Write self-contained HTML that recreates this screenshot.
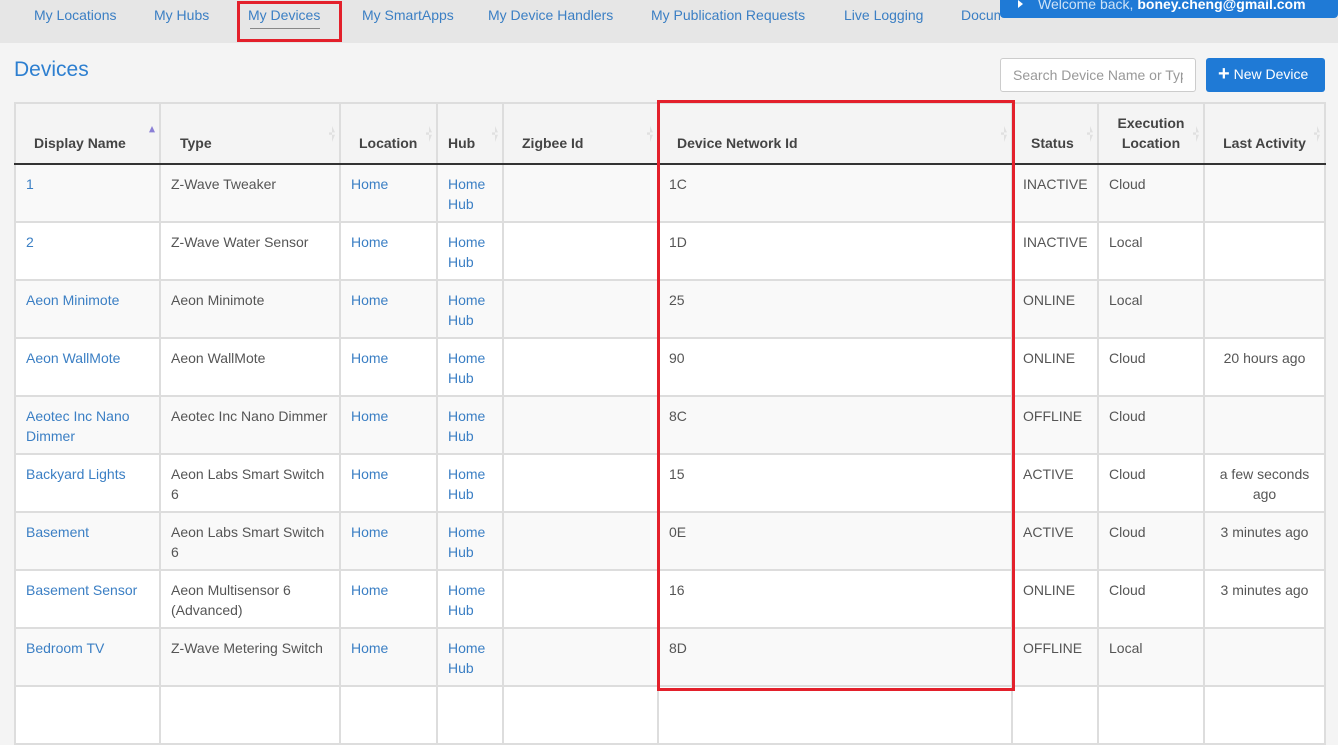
<!DOCTYPE html>
<html><head><style>
*{box-sizing:border-box;margin:0;padding:0}
body{width:1338px;height:692px;overflow:hidden;background:#f4f4f4;font-family:"Liberation Sans",sans-serif;font-size:14px;color:#555;position:relative}
.nav{position:absolute;left:0;top:0;width:1338px;height:43px;background:#e6e6e6}
.nav a{position:absolute;top:7px;color:#3b7fc4;font-size:14px;text-decoration:none;white-space:nowrap;overflow:hidden}
.welcome{position:absolute;left:1000px;top:-12px;width:338px;height:30px;background:#1f7ad6;border-radius:0 0 4px 4px;color:#cfe3f7;font-size:14px;padding:8px 0 0 38px;white-space:nowrap;overflow:hidden}
.welcome b{color:#fff}
.welcome:before{content:"";position:absolute;left:18px;top:12px;border-left:5px solid #fff;border-top:4px solid transparent;border-bottom:4px solid transparent}
h1{position:absolute;left:14px;top:58px;font-size:21px;font-weight:normal;color:#2d7fd0}
.search{position:absolute;left:1000px;top:58px;width:196px;height:34px;border:1px solid #ccc;border-radius:3px;background:#fff;color:#999;padding:8px 0 0 12px;font-size:14px;white-space:nowrap;overflow:hidden}
.search span{display:inline-block;width:170px;overflow:hidden}
.btn{position:absolute;left:1206px;top:58px;width:119px;height:34px;background:#1f7ad6;border-radius:3px;color:#fff;font-size:14px;padding:8px 0 0 12px;white-space:nowrap}
.btn b{font-size:20px;position:relative;top:1px;line-height:14px}
table{position:absolute;left:14px;top:102px;border-collapse:collapse;table-layout:fixed;width:1310px}
td,th{border:2px solid #ddd;padding:9px 10px 7px;vertical-align:top;line-height:20px;text-align:left}
th{height:60px;vertical-align:bottom;color:#444;font-weight:bold;border-bottom:2px solid #333;position:relative;background:#f4f4f4;padding-bottom:10px}
th:after{content:"";position:absolute;right:4px;top:22px;width:6px;height:16px;background:#e0e0e0;clip-path:polygon(50% 0,100% 40%,0 40%,0 55%,100% 55%,50% 100%)}
th.sorted:after{background:#8a7fd6;clip-path:polygon(50% 0,100% 40%,0 40%);}
tbody tr{height:58px}
tbody td{height:58px}
tbody tr:nth-child(odd) td{background:#f9f9f9}
tbody tr:nth-child(even) td{background:#fff}
a.l{color:#3b7fc4}
.box{position:absolute;border:3px solid #e3202b}
</style></head><body>
<div class="nav">
<a style="left:34px">My Locations</a>
<a style="left:154px">My Hubs</a>
<a style="left:248px">My Devices</a>
<div style="position:absolute;left:250px;top:28px;width:70px;height:1px;background:#888"></div>
<a style="left:362px">My SmartApps</a>
<a style="left:488px">My Device Handlers</a>
<a style="left:651px">My Publication Requests</a>
<a style="left:844px">Live Logging</a>
<a style="left:961px;width:39px">Documentation</a>
</div>
<div class="welcome">Welcome back, <b>boney.cheng@gmail.com</b></div>
<h1>Devices</h1>
<div class="search"><span>Search Device Name or Type</span></div>
<div class="btn"><b>+</b> New Device</div>
<table>
<colgroup><col style="width:145px"><col style="width:180px"><col style="width:97px"><col style="width:66px"><col style="width:155px"><col style="width:354px"><col style="width:86px"><col style="width:106px"><col style="width:121px"></colgroup>
<thead><tr><th class="sorted" style="padding-left:18px">Display Name</th><th style="padding-left:19px">Type</th><th style="padding-left:18px">Location</th><th>Hub</th><th style="padding-left:18px">Zigbee Id</th><th style="padding-left:18px">Device Network Id</th><th style="padding-left:18px">Status</th><th style="text-align:center">Execution Location</th><th style="text-align:center">Last Activity</th></tr></thead>
<tbody>
<tr><td><a class="l">1</a></td><td>Z-Wave Tweaker</td><td><a class="l">Home</a></td><td><a class="l">Home Hub</a></td><td></td><td>1C</td><td>INACTIVE</td><td>Cloud</td><td></td></tr>
<tr><td><a class="l">2</a></td><td>Z-Wave Water Sensor</td><td><a class="l">Home</a></td><td><a class="l">Home Hub</a></td><td></td><td>1D</td><td>INACTIVE</td><td>Local</td><td></td></tr>
<tr><td><a class="l">Aeon Minimote</a></td><td>Aeon Minimote</td><td><a class="l">Home</a></td><td><a class="l">Home Hub</a></td><td></td><td>25</td><td>ONLINE</td><td>Local</td><td></td></tr>
<tr><td><a class="l">Aeon WallMote</a></td><td>Aeon WallMote</td><td><a class="l">Home</a></td><td><a class="l">Home Hub</a></td><td></td><td>90</td><td>ONLINE</td><td>Cloud</td><td style="text-align:center">20 hours ago</td></tr>
<tr><td><a class="l">Aeotec Inc Nano Dimmer</a></td><td>Aeotec Inc Nano Dimmer</td><td><a class="l">Home</a></td><td><a class="l">Home Hub</a></td><td></td><td>8C</td><td>OFFLINE</td><td>Cloud</td><td></td></tr>
<tr><td><a class="l">Backyard Lights</a></td><td>Aeon Labs Smart Switch 6</td><td><a class="l">Home</a></td><td><a class="l">Home Hub</a></td><td></td><td>15</td><td>ACTIVE</td><td>Cloud</td><td style="text-align:center">a few seconds ago</td></tr>
<tr><td><a class="l">Basement</a></td><td>Aeon Labs Smart Switch 6</td><td><a class="l">Home</a></td><td><a class="l">Home Hub</a></td><td></td><td>0E</td><td>ACTIVE</td><td>Cloud</td><td style="text-align:center">3 minutes ago</td></tr>
<tr><td><a class="l">Basement Sensor</a></td><td>Aeon Multisensor 6 (Advanced)</td><td><a class="l">Home</a></td><td><a class="l">Home Hub</a></td><td></td><td>16</td><td>ONLINE</td><td>Cloud</td><td style="text-align:center">3 minutes ago</td></tr>
<tr><td><a class="l">Bedroom TV</a></td><td>Z-Wave Metering Switch</td><td><a class="l">Home</a></td><td><a class="l">Home Hub</a></td><td></td><td>8D</td><td>OFFLINE</td><td>Local</td><td></td></tr>
<tr><td></td><td></td><td></td><td></td><td></td><td></td><td></td><td></td><td></td></tr>
</tbody></table>
<div class="box" style="left:657px;top:100px;width:358px;height:591px"></div>
<div class="box" style="left:237px;top:1px;width:105px;height:41px"></div>
</body></html>
